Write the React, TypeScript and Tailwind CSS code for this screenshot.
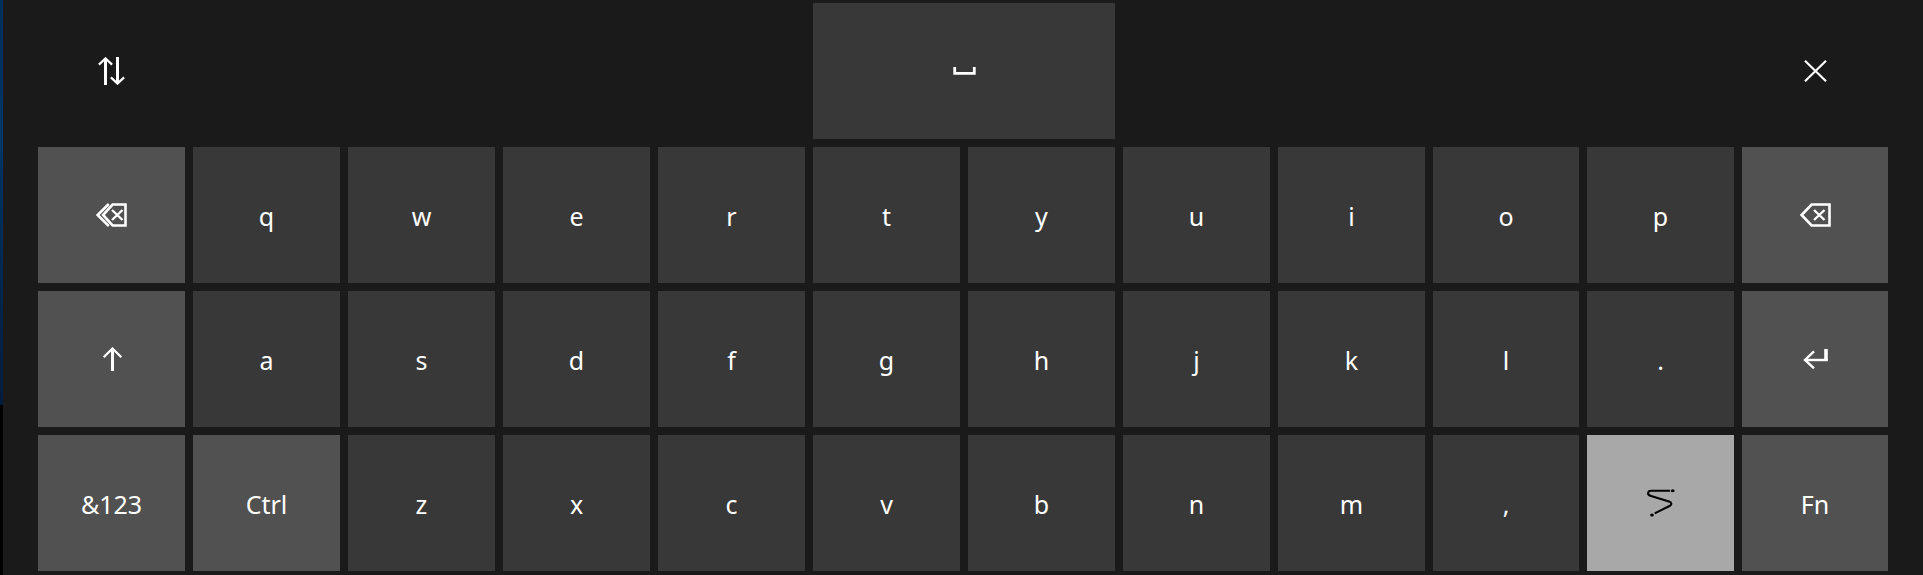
import type { ReactNode } from "react";

function Icon({ w, h, className, children }: { w: number; h: number; className?: string; children: ReactNode }) {
  return (
    <svg width={w} height={h} viewBox={`0 0 ${w} ${h}`} fill="none" stroke="currentColor" strokeWidth="2.4" className={className} aria-hidden="true">
      {children}
    </svg>
  );
}

const Swap = () => (
  <Icon w={27} h={28}>
    <path d="M7.5 28V1M19.5 0v27" strokeWidth="3" />
    <path d="M.9 7.6 7.5 1.4l6.6 6.2M12.9 20.4l6.6 6.2 6.6-6.2" strokeWidth="2.2" />
  </Icon>
);

const Space = () => (
  <Icon w={23} h={8} className="ml-px">
    <path d="M1.7 0v6.4h19.6V0" strokeWidth="2.8" />
  </Icon>
);

const Close = () => (
  <Icon w={23} h={22} className="ml-px">
    <path d="M1 .8l21 20.4M22 .8 1 21.2" strokeWidth="2.2" />
  </Icon>
);

const Backspace = () => (
  <Icon w={31} h={24} className="ml-px">
    <path d="M11.6 1.5H29.5v21H11.6L1.6 12Z" strokeWidth="2.6" />
    <path d="M14 7l10.5 10M24.5 7 14 17" />
  </Icon>
);

const BackspaceWord = () => (
  <Icon w={31} h={24}>
    <path d="M16.6 1.5H29.5v21H16.6L7 12Z" strokeWidth="2.6" />
    <path d="M12.8 1 1.6 12l11.2 11" strokeWidth="2.6" />
    <path d="M16 7l10.5 10M26.5 7 16 17" />
  </Icon>
);

const Shift = () => (
  <Icon w={19} h={24} className="ml-[2px]">
    <path d="M9.5 24V1.5" strokeWidth="3" />
    <path d="M.7 10.2 9.5 1.5l8.8 8.7" strokeWidth="2.2" />
  </Icon>
);

const Enter = () => (
  <Icon w={25} h={20} className="ml-px">
    <path d="M23 0v11" strokeWidth="3.6" />
    <path d="M24.8 11H2" />
    <path d="M11 2.4 2 11l9 8.3" />
  </Icon>
);

const Swipe = () => (
  <Icon w={28} h={28} className="ml-px">
    <path d="M23 1.8H4C.6 1.8.1 5.8 3.3 6.7L22 12.4c3.1 1 3 3.3.5 4.6L7.7 24.4" strokeWidth="2.1" />
    <ellipse cx="25.7" cy="1.8" rx="1.9" ry="1.5" fill="currentColor" stroke="none" />
    <ellipse cx="5" cy="26.1" rx="1.9" ry="1.5" fill="currentColor" stroke="none" />
  </Icon>
);

type Tone = "letter" | "control" | "active";
const tones: Record<Tone, string> = {
  letter: "bg-[#383838] text-white",
  control: "bg-[#515151] text-white",
  active: "bg-[#a8a8a8] text-black",
};

function Key({ label, tone = "letter", children }: { label: string; tone?: Tone; children?: ReactNode }) {
  return (
    <button aria-label={label} className={`flex h-[136px] items-center justify-center ${tones[tone]}`}>
      {children ?? <span className="pt-[2px] leading-[34px]">{label}</span>}
    </button>
  );
}

const letters = (s: string) => s.split("").map((c) => <Key key={c} label={c} />);

export default function App() {
  return (
    <div className="flex h-[575px] w-full bg-[#1a1a1a] font-['Noto_Sans','Open_Sans',sans-serif] text-[25px] text-white">
      <div className="flex w-[3px] shrink-0 flex-col bg-black">
        <div className="h-[405px] bg-linear-to-b from-[#002f5c] via-[#003565] via-35% to-[#001c3c]" />
      </div>
      <div className="ml-[35px] mt-[3px] grid h-[568px] w-[1850px] grid-cols-[repeat(9,147px)_146px_147px_146px] gap-2">
        <button aria-label="Move" className="flex h-[136px] items-center justify-center"><Swap /></button>
        <button aria-label="Space" className="col-span-2 col-start-6 flex h-[136px] items-center justify-center bg-[#383838]"><Space /></button>
        <button aria-label="Close" className="col-start-12 flex h-[136px] items-center justify-center"><Close /></button>

        <Key label="Delete word" tone="control"><BackspaceWord /></Key>
        {letters("qwertyuiop")}
        <Key label="Backspace" tone="control"><Backspace /></Key>

        <Key label="Shift" tone="control"><Shift /></Key>
        {letters("asdfghjkl.")}
        <Key label="Enter" tone="control"><Enter /></Key>

        <Key label="&123" tone="control" />
        <Key label="Ctrl" tone="control" />
        {letters("zxcvbnm,")}
        <Key label="Swipe" tone="active"><Swipe /></Key>
        <Key label="Fn" tone="control" />
      </div>
    </div>
  );
}
